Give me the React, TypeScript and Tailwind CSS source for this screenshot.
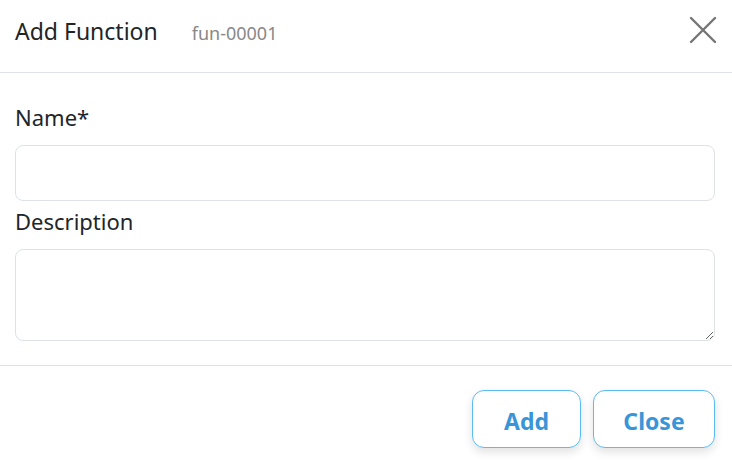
function CloseIcon() {
    return (
        <svg width="28" height="28" viewBox="0 0 28 28" fill="none" stroke="#757575" strokeWidth="2.4" strokeLinecap="round">
            <path d="M2 2L26 26M26 2L2 26" />
        </svg>
    );
}

export default function App() {
    return (
        <div className="w-[732px] h-[462px] bg-white text-[#212529] overflow-hidden" style={{ fontFamily: '"Noto Sans", "Open Sans", sans-serif' }}>
            {/* Header */}
            <div className="h-[73px] flex items-start justify-between border-b border-[#dee2e6] pl-[15px] pr-[15px]">
                <div className="flex items-baseline gap-[34px] pt-[15px]">
                    <h1 className="text-[23px] leading-[32px] font-normal">Add Function</h1>
                    <span className="text-[18px] text-[#888]">fun-00001</span>
                </div>
                <button className="mt-[16px]">
                    <CloseIcon />
                </button>
            </div>

            {/* Body */}
            <div className="pl-[15px] pr-[17px] pt-[28px] h-[293px] border-b border-[#dee2e6]">
                <label className="block text-[22px] leading-[32px] mb-[12px]">Name*</label>
                <input type="text" className="block w-full h-[56px] rounded-[8px] border border-[#dee2e6] px-3 outline-none" />
                <label className="block text-[22px] leading-[32px] mt-[4px] mb-[12px]">Description</label>
                <textarea className="block w-full h-[92px] rounded-[8px] border border-[#dee2e6] px-3 outline-none" />
            </div>

            {/* Footer */}
            <div className="flex justify-end gap-[12px] pt-[24px] pr-[17px]">
                <button className="w-[109px] h-[58px] pt-[4px] rounded-[12px] border border-[#5bbcf0] text-[#3a95d8] text-[23px] font-bold shadow-[0_4px_10px_rgba(0,0,0,0.12)] bg-white">
                    Add
                </button>
                <button className="w-[122px] h-[58px] pt-[4px] rounded-[12px] border border-[#5bbcf0] text-[#3a95d8] text-[23px] font-bold shadow-[0_4px_10px_rgba(0,0,0,0.12)] bg-white">
                    Close
                </button>
            </div>
        </div>
    );
}
